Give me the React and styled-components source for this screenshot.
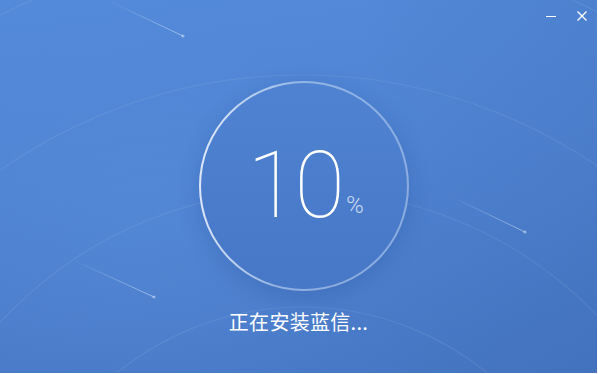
import React from "react";
import styled, { createGlobalStyle } from "styled-components";

const Global = createGlobalStyle`
  html, body { margin: 0; padding: 0; background: #ffffff; }
  body { font-family: "Noto Sans", "Noto Sans CJK SC", sans-serif; }
`;

const Window = styled.div`
  position: relative;
  width: 597px;
  height: 373px;
  overflow: hidden;
  background:
    radial-gradient(ellipse 260px 200px at 150px 230px, rgba(90, 145, 222, 0.35), rgba(90, 145, 222, 0) 100%),
    linear-gradient(90deg, rgba(0, 0, 0, 0) 60%, rgba(20, 50, 110, 0.07) 100%),
    linear-gradient(172deg, #538ad9 0%, #4f84d3 45%, #4676c3 100%);
  display: flex;
  flex-direction: column;
`;

const Backdrop = styled.svg`
  position: absolute;
  left: 0;
  top: 0;
  width: 597px;
  height: 373px;
  pointer-events: none;
`;

const TitleBar = styled.div`
  position: relative;
  height: 32px;
  display: flex;
  justify-content: flex-end;
  align-items: center;
  padding-right: 8px;
  gap: 17px;
`;

const WinButton = styled.button`
  width: 14px;
  height: 14px;
  padding: 0;
  border: 0;
  background: transparent;
  display: flex;
  align-items: center;
  justify-content: center;
  cursor: pointer;
`;

const Main = styled.div`
  position: relative;
  flex: 1;
  display: flex;
  flex-direction: column;
  align-items: center;
  padding-top: 49px;
`;

const Ring = styled.div`
  box-sizing: border-box;
  width: 210px;
  height: 210px;
  margin-left: 11px;
  border-radius: 50%;
  border: 2px solid transparent;
  background:
    linear-gradient(180deg, #4f83d2 0%, #4777c7 100%) padding-box,
    linear-gradient(95deg, rgba(255, 255, 255, 0.85) 0%, rgba(255, 255, 255, 0.38) 45%, rgba(255, 255, 255, 0.35) 100%) border-box;
  box-shadow: 0 6px 22px rgba(25, 60, 130, 0.22);
  display: flex;
  align-items: center;
  justify-content: center;
`;

const Reading = styled.div`
  display: flex;
  align-items: baseline;
  margin-left: 3px;
  margin-top: 0;
`;

const Number = styled.span`
  font-family: Roboto, Inter, "Liberation Sans", sans-serif;
  font-weight: 100;
  font-size: 92px;
  line-height: 1;
  color: #ffffff;
  letter-spacing: -3px;
`;

const Percent = styled.span`
  font-family: Roboto, Inter, "Liberation Sans", sans-serif;
  font-weight: 300;
  font-size: 24px;
  line-height: 1;
  color: rgba(255, 255, 255, 0.72);
  margin-left: 4px;
  position: relative;
  top: -4px;
`;

const Status = styled.div`
  margin-top: 17px;
  font-family: "Noto Sans CJK SC", "Noto Sans", sans-serif;
  font-size: 20px;
  line-height: 28px;
  color: #ffffff;
  letter-spacing: 0.3px;
`;

const arcs = [293, 410, 525, 658];
const comets = [
  { x1: 107, y1: 0, x2: 183, y2: 36 },
  { x1: 73, y1: 260, x2: 154, y2: 297 },
  { x1: 450, y1: 196, x2: 525, y2: 232 },
];

export default function App() {
  return (
    <>
      <Global />
      <Window>
        <Backdrop viewBox="0 0 597 373">
          <defs>
            {comets.map((c, i) => (
              <linearGradient
                key={i}
                id={`comet${i}`}
                gradientUnits="userSpaceOnUse"
                x1={c.x1}
                y1={c.y1}
                x2={c.x2}
                y2={c.y2}
              >
                <stop offset="0" stopColor="#fff" stopOpacity="0" />
                <stop offset="1" stopColor="#fff" stopOpacity="0.45" />
              </linearGradient>
            ))}
          </defs>
          {arcs.map((r) => (
            <circle
              key={r}
              cx="302"
              cy="600"
              r={r}
              fill="none"
              stroke="#ffffff"
              strokeOpacity="0.08"
              strokeWidth="1.2"
            />
          ))}
          {comets.map((c, i) => (
            <g key={i}>
              <line
                x1={c.x1}
                y1={c.y1}
                x2={c.x2}
                y2={c.y2}
                stroke={`url(#comet${i})`}
                strokeWidth="1"
              />
              <circle cx={c.x2} cy={c.y2} r="1.6" fill="#ffffff" fillOpacity="0.4" />
            </g>
          ))}
        </Backdrop>
        <TitleBar>
          <WinButton aria-label="minimize">
            <svg width="12" height="12" viewBox="0 0 12 12">
              <line x1="1" y1="6.5" x2="11" y2="6.5" stroke="#fff" strokeWidth="1" />
            </svg>
          </WinButton>
          <WinButton aria-label="close">
            <svg width="12" height="12" viewBox="0 0 12 12">
              <path d="M1.5 1.5 L10.5 10.5 M10.5 1.5 L1.5 10.5" stroke="#fff" strokeWidth="1.3" fill="none" />
            </svg>
          </WinButton>
        </TitleBar>
        <Main>
          <Ring>
            <Reading>
              <Number>10</Number>
              <Percent>%</Percent>
            </Reading>
          </Ring>
          <Status>正在安装蓝信...</Status>
        </Main>
      </Window>
    </>
  );
}
